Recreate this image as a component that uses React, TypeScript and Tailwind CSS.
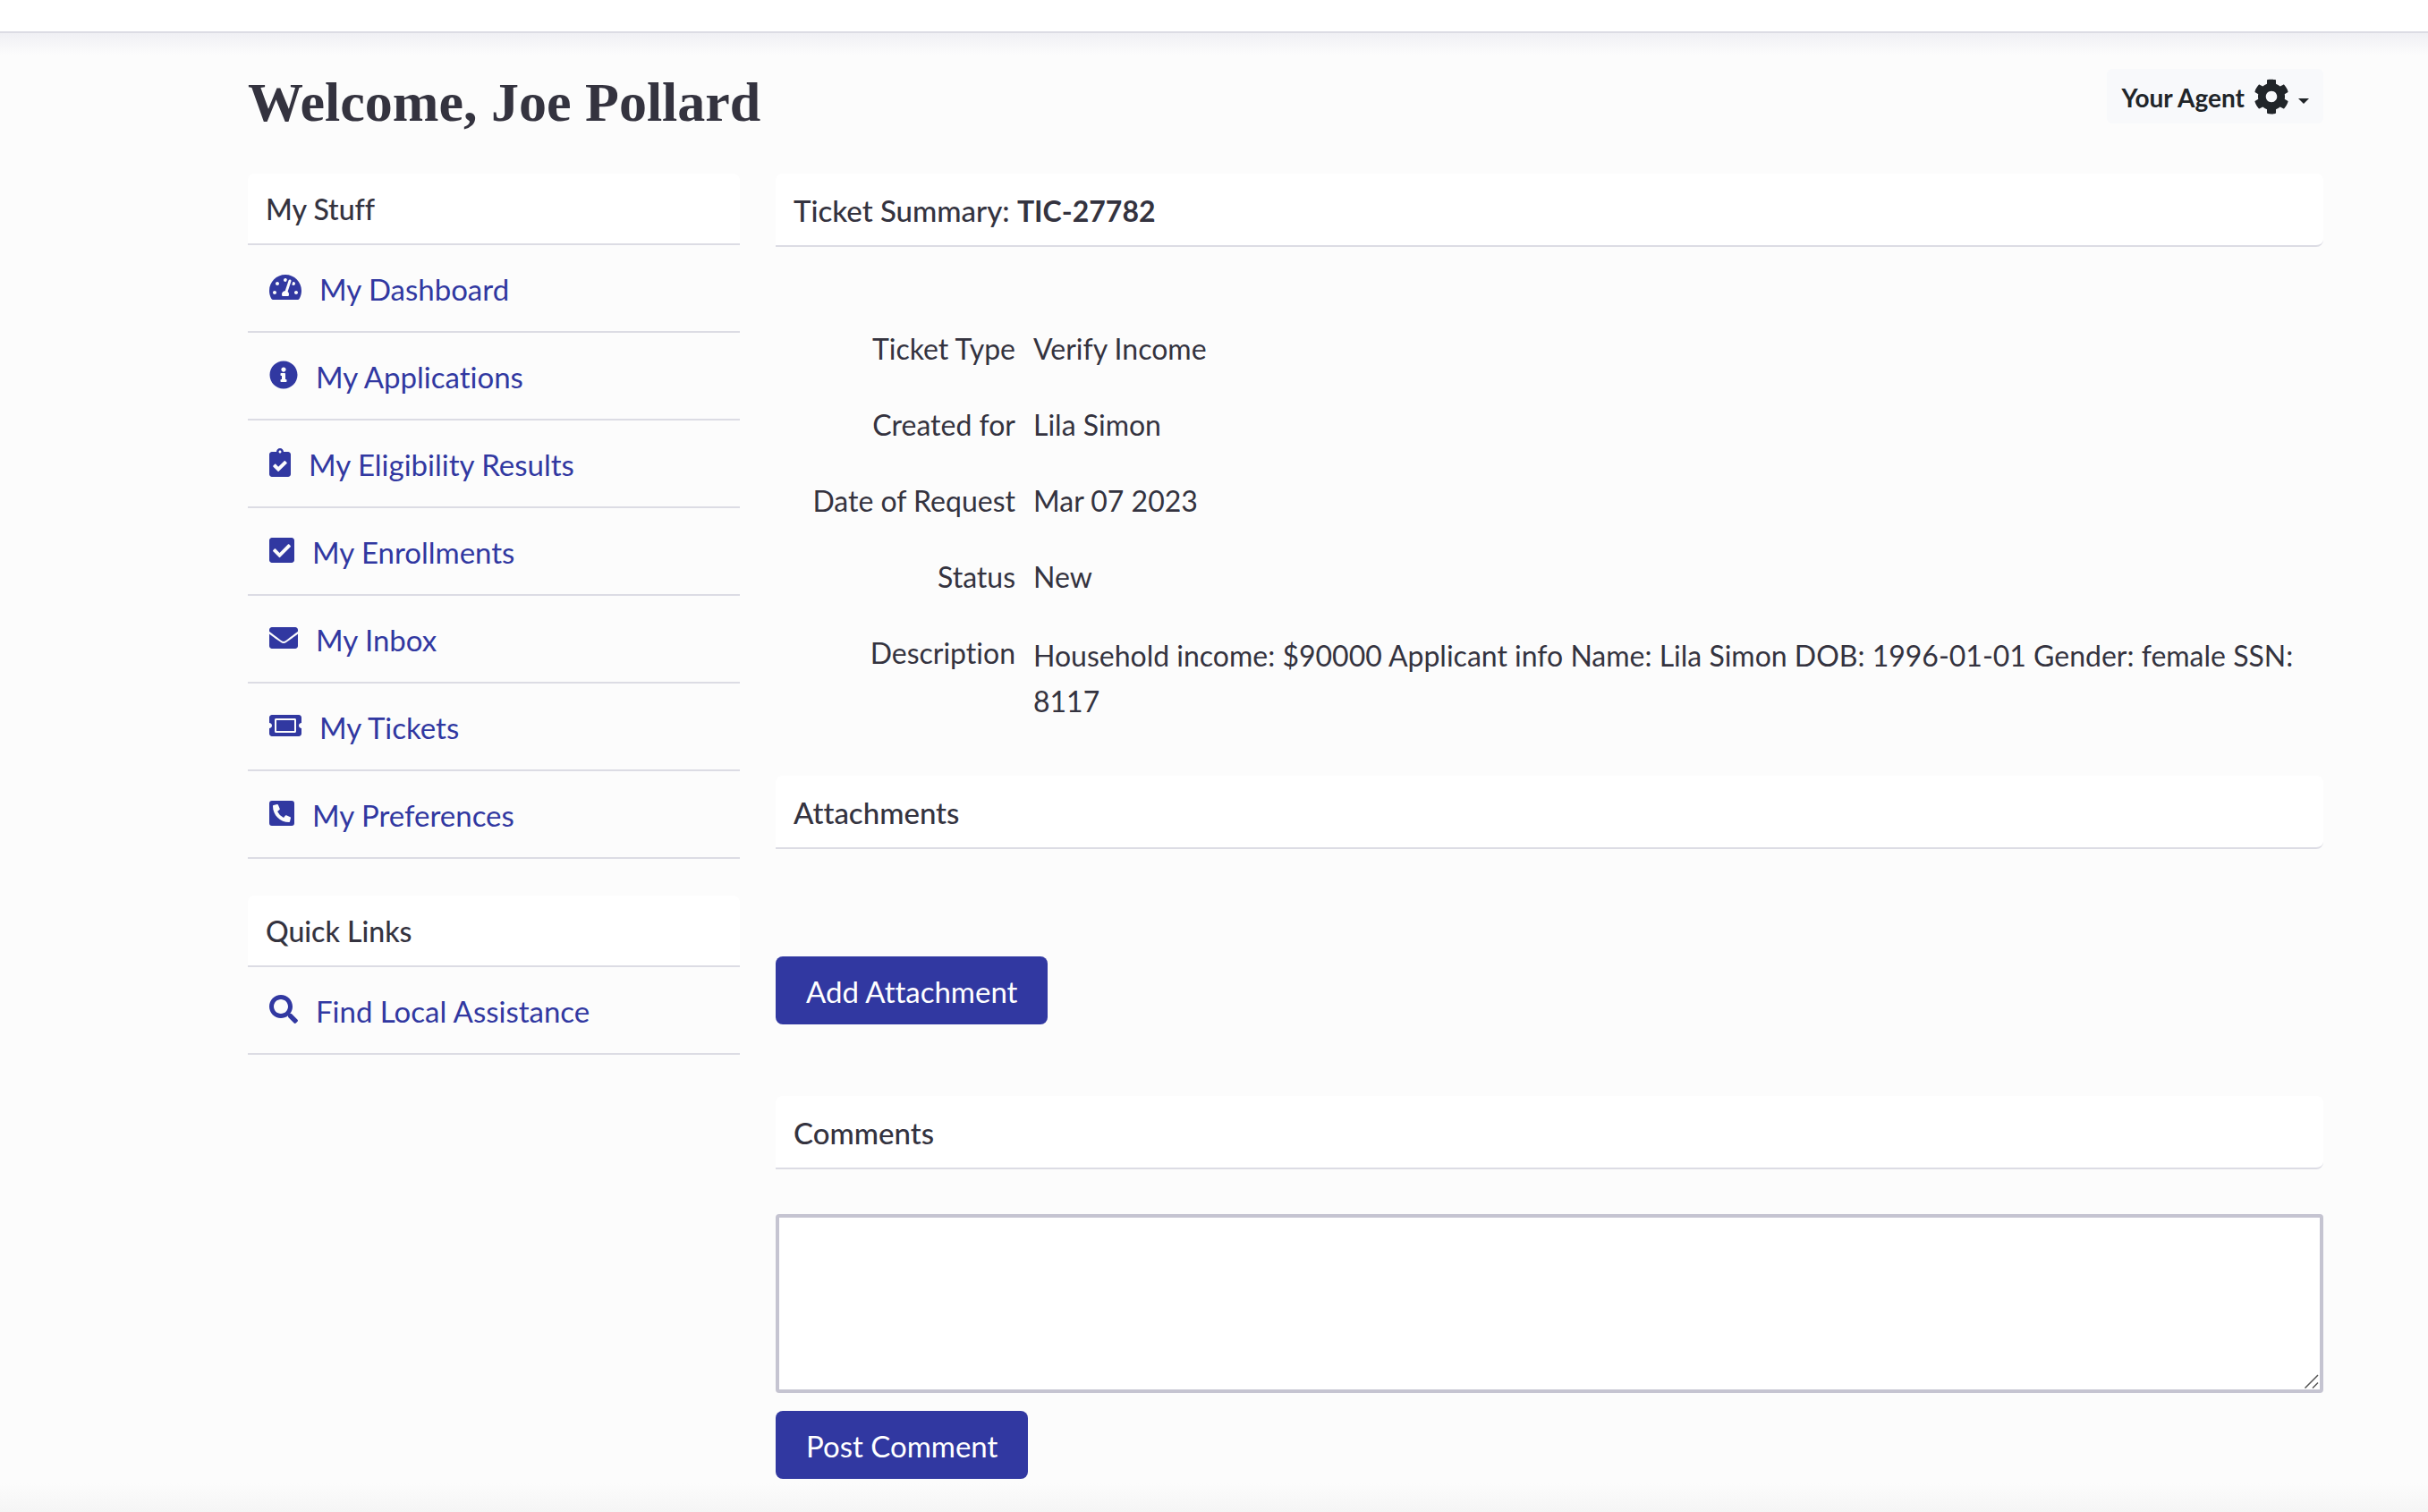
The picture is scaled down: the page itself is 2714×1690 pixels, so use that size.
import type { ReactNode } from 'react';
import type { IconType } from 'react-icons';
import {
  FaCheckSquare,
  FaClipboardCheck,
  FaCog,
  FaEnvelope,
  FaInfoCircle,
  FaPhoneSquareAlt,
  FaSearch,
  FaTachometerAlt,
  FaTicketAlt,
} from 'react-icons/fa';

type NavItem = { label: string; icon: IconType; iconWidth: string };

const myStuff: NavItem[] = [
  { label: 'My Dashboard', icon: FaTachometerAlt, iconWidth: 'w-9' },
  { label: 'My Applications', icon: FaInfoCircle, iconWidth: 'w-8' },
  { label: 'My Eligibility Results', icon: FaClipboardCheck, iconWidth: 'w-6' },
  { label: 'My Enrollments', icon: FaCheckSquare, iconWidth: 'w-7' },
  { label: 'My Inbox', icon: FaEnvelope, iconWidth: 'w-8' },
  { label: 'My Tickets', icon: FaTicketAlt, iconWidth: 'w-9' },
  { label: 'My Preferences', icon: FaPhoneSquareAlt, iconWidth: 'w-7' },
];

const quickLinks: NavItem[] = [
  { label: 'Find Local Assistance', icon: FaSearch, iconWidth: 'w-8' },
];

const details = [
  { label: 'Ticket Type', value: 'Verify Income' },
  { label: 'Created for', value: 'Lila Simon' },
  { label: 'Date of Request', value: 'Mar 07 2023' },
  { label: 'Status', value: 'New' },
];

const description =
  'Household income: $90000 Applicant info Name: Lila Simon DOB: 1996-01-01 Gender: female SSN: 8117';

function NavSection({ title, items }: { title: string; items: NavItem[] }) {
  return (
    <nav aria-label={title}>
      <h2 className="flex h-20 items-center rounded-t-lg border-b-2 border-[#dcdce4] bg-white px-5 font-medium">
        {title}
      </h2>
      <ul>
        {items.map(({ label, icon: Icon, iconWidth }) => (
          <li key={label} className="border-b-2 border-[#dcdce4]">
            <a href="#" className="flex h-24 items-center gap-5 px-6 pt-0.5 text-[33px] text-[#3138a1]">
              <Icon className={`${iconWidth} mb-1 h-8 shrink-0`} aria-hidden="true" />
              {label}
            </a>
          </li>
        ))}
      </ul>
    </nav>
  );
}

function SectionHeading({ children }: { children: ReactNode }) {
  return (
    <h2 className="flex h-[82px] items-center rounded-t-lg rounded-br-lg border-b-2 border-[#dcdce4] bg-white px-5 pt-0.5 text-[33px] font-medium whitespace-pre">
      {children}
    </h2>
  );
}

function PrimaryButton({ children }: { children: ReactNode }) {
  return (
    <button type="button" className="h-[76px] rounded-lg bg-[#3138a1] px-[34px] pt-0.5 text-[33px] text-white">
      {children}
    </button>
  );
}

export default function App() {
  return (
    <div className="flex min-h-screen flex-col bg-[#fcfcfc] font-['Lato',sans-serif] text-[32px] leading-[45px] text-[#34333f] [font-variant-ligatures:no-common-ligatures]">
      <div className="h-[37px] border-b-2 border-[#dcdce4] bg-white" />
      <div className="h-6 bg-linear-to-b from-[#f0f0f4] to-[#fcfcfc]" />

      <div className="grow pr-[117px] pl-[277px]">
        <header className="flex h-[133px] items-start justify-between pt-4">
          <h1 className="pt-0.5 font-['Liberation_Serif',serif] text-[62px] leading-[70px] font-bold">
            Welcome, Joe Pollard
          </h1>
          <button
            type="button"
            aria-haspopup="menu"
            className="flex h-[61px] items-center rounded-md bg-[#f8f9fb] px-4 text-[28px] font-bold text-[#212529]"
          >
            <span className="pt-1">Your Agent</span>
            <FaCog className="ml-2.5 size-10" aria-hidden="true" />
            <span
              aria-hidden="true"
              className="mt-2.5 ml-2.5 border-x-6 border-t-6 border-x-transparent border-t-[#212529]"
            />
          </button>
        </header>

        <div className="flex items-start gap-10">
          <aside className="flex w-[550px] shrink-0 flex-col gap-[41px]">
            <NavSection title="My Stuff" items={myStuff} />
            <NavSection title="Quick Links" items={quickLinks} />
          </aside>

          <main className="min-w-0 grow">
            <SectionHeading>
              Ticket Summary: <strong className="text-[32px] font-bold">TIC-27782</strong>
            </SectionHeading>

            <dl className="grid grid-cols-[268px_1fr] gap-x-5 gap-y-10 pt-[91px] pb-[58px]">
              {details.map(({ label, value }) => (
                <div key={label} className="contents">
                  <dt className="text-right">{label}</dt>
                  <dd>{value}</dd>
                </div>
              ))}
              <dt className="text-right">Description</dt>
              <dd className="leading-[51px]">{description}</dd>
            </dl>

            <SectionHeading>Attachments</SectionHeading>
            <div className="pt-[120px] pb-20">
              <PrimaryButton>Add Attachment</PrimaryButton>
            </div>

            <SectionHeading>Comments</SectionHeading>
            <form className="flex flex-col items-start gap-5 pt-[50px]">
              <div className="relative flex w-full">
                <textarea
                  aria-label="Comment"
                  className="h-[200px] w-full resize rounded border-4 border-[#c5c4d1] bg-white px-5 py-3 [&::-webkit-resizer]:bg-white"
                />
                <svg
                  viewBox="0 0 20 20"
                  className="pointer-events-none absolute right-1 bottom-1 size-5 stroke-[#555]"
                  strokeWidth="1.5"
                  aria-hidden="true"
                >
                  <path d="M3.5 18.5 18 4M12 18.5l6-6" />
                </svg>
              </div>
              <PrimaryButton>Post Comment</PrimaryButton>
            </form>
          </main>
        </div>
      </div>

      <div className="h-8 bg-linear-to-b from-[#fcfcfc] to-[#f5f5f5]" />
    </div>
  );
}
